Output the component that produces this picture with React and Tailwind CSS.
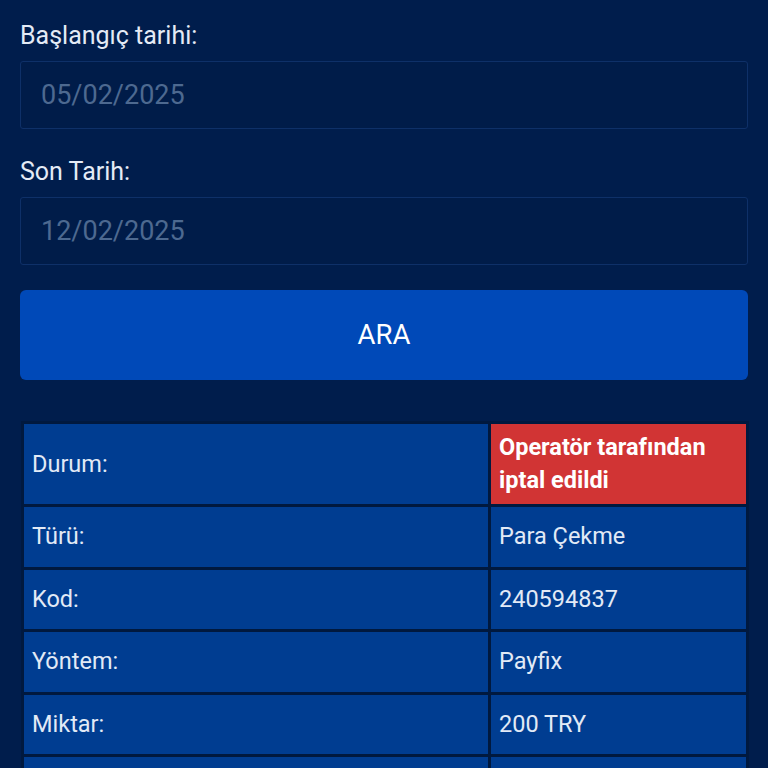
import React from "react";

const rows = [
  { label: "Durum:", value: "Operatör tarafından iptal edildi", status: true },
  { label: "Türü:", value: "Para Çekme" },
  { label: "Kod:", value: "240594837" },
  { label: "Yöntem:", value: "Payfix" },
  { label: "Miktar:", value: "200 TRY" },
  { label: "", value: "" },
];

function DateField({ label, value }) {
  return (
    <div className="flex flex-col">
      <label className="text-[25px] leading-[33px] text-[#e4ebf6]">{label}</label>
      <div className="mt-[9px] h-[68px] border border-[#0e3068] rounded-[3px] bg-[#001c49] flex items-center px-[20px]">
        <span className="text-[27px] text-[#4d6990]">{value}</span>
      </div>
    </div>
  );
}

export default function App() {
  return (
    <div
      className="h-[768px] w-[768px] bg-[#001d4c] overflow-hidden"
      style={{ fontFamily: "Roboto, 'Noto Sans', sans-serif" }}
    >
      <div className="px-[20px] pt-[19px] flex flex-col">
        <DateField label="Başlangıç tarihi:" value="05/02/2025" />
        <div className="mt-[26px]">
          <DateField label="Son Tarih:" value="12/02/2025" />
        </div>
        <button className="mt-[25px] h-[90px] w-full rounded-[6px] bg-[#0049b8] text-white text-[27.5px] flex items-center justify-center">
          ARA
        </button>
      </div>
      <div className="mt-[41px] ml-[21px] w-[728px] grid grid-cols-[464px_255px] gap-[3px] p-[3px] bg-[#00193f]">
        {rows.map((r, i) => (
          <React.Fragment key={i}>
            <div className="min-h-[59.6px] bg-[#003d91] px-[8px] py-[7px] flex items-center text-[23.5px] leading-[33px] text-[#e2eaf6]">
              {r.label}
            </div>
            <div
              className={
                r.status
                  ? "min-h-[59.6px] bg-[#d13434] px-[8px] py-[7px] flex items-center text-[23.5px] leading-[33px] font-bold text-white"
                  : "min-h-[59.6px] bg-[#003d91] px-[8px] py-[7px] flex items-center text-[23.5px] leading-[33px] text-[#e2eaf6]"
              }
            >
              {r.value}
            </div>
          </React.Fragment>
        ))}
      </div>
    </div>
  );
}
